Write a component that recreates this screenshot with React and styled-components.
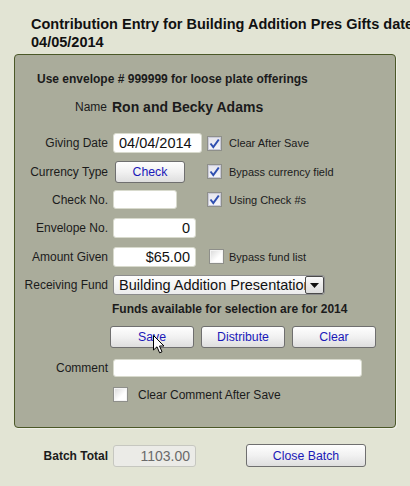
import React from 'react';
import styled, { createGlobalStyle } from 'styled-components';

const GlobalStyle = createGlobalStyle`
    html, body {
        margin: 0;
        padding: 0;
        background: #e2e4d4;
        overflow: hidden;
    }
    body {
        font-family: "Liberation Sans", Arial, sans-serif;
        color: #1b1b1b;
    }
`;

const Page = styled.div`
    width: 410px;
    height: 486px;
    padding-top: 15px;
    box-sizing: border-box;
`;

const Title = styled.h1`
    margin: 0 0 3px 31px;
    font-size: 14.5px;
    line-height: 18px;
    font-weight: bold;
    white-space: nowrap;
    color: #111;
`;

const Panel = styled.div`
    margin-left: 14px;
    width: 382px;
    box-sizing: border-box;
    background: #aaac9b;
    border: 1px solid #4b5828;
    border-radius: 4px;
    padding: 16px 0 23px 0;
    box-shadow: 1px 1px 1px rgba(255, 255, 255, 0.5);
`;

const Intro = styled.div`
    padding-left: 22px;
    font-size: 12px;
    line-height: 16px;
    font-weight: bold;
`;

const Row = styled.div`
    display: flex;
    align-items: center;
    height: ${p => p.$h || 28.4}px;
    margin-top: ${p => p.$mt || 0}px;
    padding-left: ${p => p.$indent || 0}px;
`;

const Label = styled.label`
    flex: none;
    width: ${p => p.$w || 98}px;
    padding-right: 5px;
    box-sizing: border-box;
    text-align: right;
    font-size: 12px;
    font-weight: ${p => (p.$bold ? 'bold' : 'normal')};
    white-space: nowrap;
`;

const Slot = styled.div`
    flex: none;
    width: 94px;
    display: flex;
    align-items: center;
`;

const NameValue = styled.span`
    font-size: 14px;
    font-weight: bold;
`;

const Field = styled.input`
    box-sizing: border-box;
    width: ${p => p.$w}px;
    height: ${p => p.$h || 20}px;
    margin: 0;
    padding: 0 5px;
    border: 1px solid ${p => (p.$disabled ? '#c6c7c0' : '#d8dacd')};
    border-radius: 3px;
    background: ${p => (p.$disabled ? '#ebebe7' : '#fff')};
    color: ${p => (p.$disabled ? '#6a6a6a' : '#111')};
    font-family: "Liberation Sans", Arial, sans-serif;
    font-size: ${p => p.$fs || 14.5}px;
    text-align: ${p => p.$align || 'left'};
    outline: none;
`;

const Button = styled.button`
    box-sizing: border-box;
    width: ${p => p.$w}px;
    height: ${p => p.$h || 22}px;
    margin: 0 0 0 ${p => p.$ml || 0}px;
    padding: 0;
    border: 1px solid #6f6f6f;
    border-radius: 3px;
    background: linear-gradient(#fefefe, #f1f1f1 50%, #dedede);
    color: #1b19b8;
    font-family: "Liberation Sans", Arial, sans-serif;
    font-size: 12.3px;
    cursor: default;
`;

const ButtonGroup = styled.div`
    position: relative;
    display: flex;
    gap: 7px;
`;

const Option = styled.div`
    display: flex;
    align-items: center;
    gap: ${p => p.$gap || 7}px;
    margin-left: ${p => p.$ml || 0}px;
    font-size: ${p => p.$fs || 11}px;
    white-space: nowrap;
`;

const Box = styled.span`
    flex: none;
    box-sizing: border-box;
    width: 15px;
    height: 15px;
    display: inline-flex;
    align-items: center;
    justify-content: center;
    border: 1px solid #8e8f8a;
    background: ${p =>
        p.$checked
            ? 'linear-gradient(#e4e4ec, #f6f6fa)'
            : 'linear-gradient(135deg, #d8d8d8, #ffffff 60%)'};
    box-shadow: inset 0 0 0 1px ${p => (p.$checked ? '#c9cad8' : '#f4f4f4')};
`;

const Select = styled.div`
    box-sizing: border-box;
    width: 212px;
    height: 20px;
    display: flex;
    border: 1px solid #8c8c8c;
    border-radius: 3px;
    background: linear-gradient(#fdfdfd, #ececec);
    overflow: hidden;
`;

const SelectText = styled.span`
    flex: 1;
    overflow: hidden;
    white-space: nowrap;
    padding-left: 5px;
    font-size: 14.5px;
    line-height: 18px;
    color: #111;
`;

const SelectArrow = styled.span`
    flex: none;
    width: 19px;
    box-sizing: border-box;
    border: 1px solid #4a4a4a;
    border-radius: 2px;
    background: linear-gradient(#fafafa, #dcdcdc);
    display: flex;
    align-items: center;
    justify-content: center;
`;

const Note = styled.div`
    font-size: 12px;
    font-weight: bold;
`;

const Pointer = styled.svg`
    position: absolute;
    left: 43px;
    top: 9px;
    pointer-events: none;
`;

const Checkbox = ({ checked }) => (
    <Box $checked={checked}>
        {checked && (
            <svg width="11" height="11" viewBox="0 0 11 11">
                <path d="M1.5 5.5 L4.3 9 L9.8 1.5" fill="none" stroke="#2f4fb0" strokeWidth="2" />
            </svg>
        )}
    </Box>
);

const App = () => {
    return (
        <Page>
            <GlobalStyle />
            <Title>
                Contribution Entry for Building Addition Pres Gifts date
                <br />
                04/05/2014
            </Title>
            <Panel>
                <Intro>Use envelope # 999999 for loose plate offerings</Intro>
                <Row $h={20} $mt={10}>
                    <Label $w={97}>Name</Label>
                    <NameValue>Ron and Becky Adams</NameValue>
                </Row>
                <Row $mt={12}>
                    <Label>Giving Date</Label>
                    <Slot>
                        <Field readOnly value="04/04/2014" $w={89} />
                    </Slot>
                    <Option>
                        <Checkbox checked />
                        Clear After Save
                    </Option>
                </Row>
                <Row>
                    <Label>Currency Type</Label>
                    <Slot>
                        <Button $w={70} $ml={2}>Check</Button>
                    </Slot>
                    <Option>
                        <Checkbox checked />
                        Bypass currency field
                    </Option>
                </Row>
                <Row>
                    <Label>Check No.</Label>
                    <Slot>
                        <Field readOnly value="" $w={64} $h={19} />
                    </Slot>
                    <Option>
                        <Checkbox checked />
                        Using Check #s
                    </Option>
                </Row>
                <Row>
                    <Label>Envelope No.</Label>
                    <Slot>
                        <Field readOnly value="0" $w={83} $align="right" />
                    </Slot>
                </Row>
                <Row>
                    <Label>Amount Given</Label>
                    <Slot>
                        <Field readOnly value="$65.00" $w={83} $align="right" />
                    </Slot>
                    <Option $gap={5} $ml={2}>
                        <Checkbox />
                        Bypass fund list
                    </Option>
                </Row>
                <Row>
                    <Label>Receiving Fund</Label>
                    <Select>
                        <SelectText>Building Addition Presentation</SelectText>
                        <SelectArrow>
                            <svg width="9" height="5" viewBox="0 0 9 5">
                                <path d="M0 0 H9 L4.5 5 Z" fill="#111" />
                            </svg>
                        </SelectArrow>
                    </Select>
                </Row>
                <Row $h={20} $indent={97}>
                    <Note>Funds available for selection are for 2014</Note>
                </Row>
                <Row $h={22} $mt={7} $indent={95}>
                    <ButtonGroup>
                        <Button $w={84}>Save</Button>
                        <Button $w={84}>Distribute</Button>
                        <Button $w={84}>Clear</Button>
                        <Pointer width="13" height="19" viewBox="0 0 13 19">
                            <path
                                d="M0.5 0.5 L0.5 15 L4 11.8 L6.6 17.8 L9 16.8 L6.5 11 L11 11 Z"
                                fill="#fff"
                                stroke="#000"
                                strokeWidth="1"
                                strokeLinejoin="round"
                            />
                        </Pointer>
                    </ButtonGroup>
                </Row>
                <Row $h={20} $mt={10}>
                    <Label>Comment</Label>
                    <Field readOnly value="" $w={249} $h={18} />
                </Row>
                <Row $h={18} $mt={7.5} $indent={98}>
                    <Option $gap={10} $fs={12}>
                        <Checkbox />
                        Clear Comment After Save
                    </Option>
                </Row>
            </Panel>
            <Row $h={24} $mt={16} $indent={15}>
                <Label $bold>Batch Total</Label>
                <Field readOnly value="1103.00" $w={83} $h={22} $align="right" $disabled $fs={14} />
                <Button $w={120} $h={23} $ml={50}>Close Batch</Button>
            </Row>
        </Page>
    );
};

export default App;
